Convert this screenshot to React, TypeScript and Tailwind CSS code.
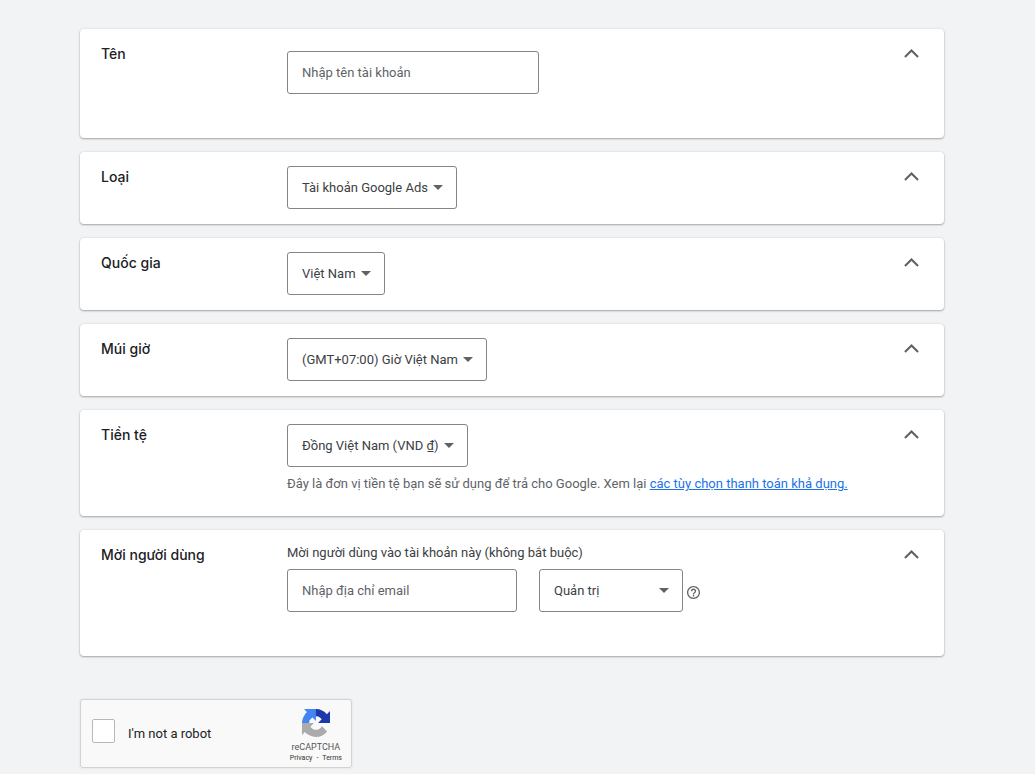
import { useState, type ReactNode } from "react"
import { clsx } from "clsx"

const fieldBase = "border border-[#80868b] rounded-[3px] bg-white text-[13px] leading-5 outline-none focus:border-[#1a73e8]"

interface SectionProps {
  title: string
  className?: string
  children: ReactNode
}

function Section({ title, className, children }: SectionProps) {
  const [open, setOpen] = useState(true)

  return (
    <section className="flex items-start rounded bg-white pl-[21px] pr-[15px] shadow-[0_1px_2px_rgba(60,64,67,0.4),0_0_2px_rgba(60,64,67,0.15)]">
      <h2 className="w-[186px] shrink-0 pt-[15px] pb-3 font-['Inter','Roboto',sans-serif] text-sm leading-5 font-medium text-[#202124]">
        {title}
      </h2>
      <div className={clsx("min-w-0 flex-1", className)}>{open && children}</div>
      <button
        type="button"
        aria-label={title}
        aria-expanded={open}
        onClick={() => setOpen(!open)}
        className="mt-1.5 flex h-9 w-9 shrink-0 items-center justify-center rounded-full text-[#5f6368] hover:bg-gray-100"
      >
        <svg width="15" height="9" viewBox="6 8 12 7.41" fill="currentColor" className={open ? "" : "rotate-180"}>
          <path d="M12 8l-6 6 1.2 1.2L12 10.4l4.8 4.8L18 14z" />
        </svg>
      </button>
    </section>
  )
}

interface DropdownProps {
  label: string
  value: string
  className?: string
}

function Dropdown({ label, value, className }: DropdownProps) {
  return (
    <div className={clsx("relative inline-flex max-w-full", className)}>
      <select
        aria-label={label}
        defaultValue={value}
        className={`${fieldBase} h-[43px] w-full appearance-none pl-[14px] pr-7 text-[#3c4043]`}
      >
        <option value={value}>{value}</option>
      </select>
      <svg
        width="10"
        height="5"
        viewBox="0 0 10 5"
        fill="#5f6368"
        className="pointer-events-none absolute right-[14px] top-[19px]"
      >
        <path d="M0 0h10L5 5z" />
      </svg>
    </div>
  )
}

function Recaptcha() {
  return (
    <div className="flex h-[69px] w-[272px] items-center justify-between rounded-[3px] border border-[#d3d3d3] bg-[#f9f9f9] pl-[11px] pr-[9px] shadow-[0_0_3px_rgba(0,0,0,0.08)]">
      <label className="flex items-center gap-[13px] text-[13px] leading-5 text-[#222222]">
        <input
          type="checkbox"
          className="mb-[5px] h-6 w-[23px] appearance-none rounded-[2px] border border-[#b8b8b8] bg-white checked:bg-[#4285f4]"
        />
        I'm not a robot
      </label>
      <div className="flex flex-col items-center pt-1 text-[#555555]">
        <svg width="28" height="28" viewBox="0 0 64 64">
          <path
            fill="#1c3aa9"
            d="M64 31.955l-.033-1.37V4.687l-7.16 7.16C50.948 4.674 42.033.093 32.05.093c-10.4 0-19.622 4.96-25.458 12.64l11.736 11.86a15.55 15.55 0 0 1 4.754-5.334c2.05-1.6 4.952-2.906 8.968-2.906.485 0 .86.057 1.135.163 4.976.393 9.288 3.14 11.828 7.124l-8.307 8.307L64 31.953"
          />
          <path
            fill="#4285f4"
            d="M31.862.094l-1.37.033H4.594l7.16 7.16C4.58 13.147 0 22.06 0 32.046c0 10.4 4.96 19.622 12.64 25.458L24.5 45.768a15.55 15.55 0 0 1-5.334-4.754c-1.6-2.05-2.906-4.952-2.906-8.968 0-.485.057-.86.163-1.135.393-4.976 3.14-9.288 7.124-11.828l8.307 8.307L31.86.095"
          />
          <path
            fill="#ababab"
            d="M.001 32.045l.033 1.37v25.898l7.16-7.16c5.86 7.173 14.774 11.754 24.76 11.754 10.4 0 19.622-4.96 25.458-12.64l-11.736-11.86a15.55 15.55 0 0 1-4.754 5.334c-2.05 1.6-4.952 2.906-8.968 2.906-.485 0-.86-.057-1.135-.163-4.976-.393-9.288-3.14-11.828-7.124l8.307-8.307c-10.522.04-22.4.066-27.295-.005"
          />
        </svg>
        <div className="mt-1 text-[9px] leading-3">reCAPTCHA</div>
        <div className="flex gap-1 text-[7px] leading-[10px] text-[#333333]">
          <a href="#privacy">Privacy</a>
          <span>-</span>
          <a href="#terms">Terms</a>
        </div>
      </div>
    </div>
  )
}

export default function App() {
  return (
    <main className="min-h-screen bg-[#f1f3f4] pt-[29px] pb-1.5 pl-20 pr-[91px] font-['Roboto',sans-serif]">
      <div className="flex flex-col gap-[14px]">
        <Section title="Tên" className="pt-[22px] pb-11">
          <input
            type="text"
            aria-label="Tên"
            placeholder="Nhập tên tài khoản"
            className={`${fieldBase} block h-[43px] w-[252px] px-[14px] text-[#3c4043] placeholder:text-[#5f6368]`}
          />
        </Section>

        <Section title="Loại" className="flex pt-[14px] pb-[15px]">
          <Dropdown label="Loại" value="Tài khoản Google Ads" />
        </Section>

        <Section title="Quốc gia" className="flex pt-[14px] pb-[15px]">
          <Dropdown label="Quốc gia" value="Việt Nam" />
        </Section>

        <Section title="Múi giờ" className="flex pt-[14px] pb-[15px]">
          <Dropdown label="Múi giờ" value="(GMT+07:00) Giờ Việt Nam" />
        </Section>

        <Section title="Tiền tệ" className="pt-[14px] pb-[22px]">
          <div className="flex">
            <Dropdown label="Tiền tệ" value="Đồng Việt Nam (VND ₫)" />
          </div>
          <p className="mt-[7px] text-[13px] leading-5 text-[#5f6368]">
            Đây là đơn vị tiền tệ bạn sẽ sử dụng để trả cho Google. Xem lại{" "}
            <a href="#payments" className="text-[#1a73e8] underline">
              các tùy chọn thanh toán khả dụng.
            </a>
          </p>
        </Section>

        <Section title="Mời người dùng" className="pt-[13px] pb-11">
          <label htmlFor="invite-email" className="block text-[13px] leading-5 text-[#3c4043]">
            Mời người dùng vào tài khoản này (không bắt buộc)
          </label>
          <div className="mt-1.5 flex items-center">
            <input
              id="invite-email"
              type="email"
              placeholder="Nhập địa chỉ email"
              className={`${fieldBase} h-[43px] w-[230px] px-[14px] text-[#3c4043] placeholder:text-[#5f6368]`}
            />
            <Dropdown label="Cấp truy cập" value="Quản trị" className="ml-[22px] w-36" />
            <button type="button" aria-label="Trợ giúp" className="ml-1 mt-1 text-[#5f6368]">
              <svg width="13" height="13" viewBox="2 2 20 20" fill="currentColor">
                <path d="M11 18h2v-2h-2v2zm1-16C6.48 2 2 6.48 2 12s4.480 10 10 10 10-4.480 10-10S17.520 2 12 2zm0 18c-4.410 0-8-3.590-8-8s3.590-8 8-8 8 3.590 8 8-3.590 8-8 8zm0-14c-2.210 0-4 1.790-4 4h2c0-1.100.9-2 2-2s2 .9 2 2c0 2-3 1.750-3 5h2c0-2.250 3-2.500 3-5 0-2.210-1.790-4-4-4z" />
              </svg>
            </button>
          </div>
        </Section>
      </div>

      <div className="mt-[43px]">
        <Recaptcha />
      </div>
    </main>
  )
}
